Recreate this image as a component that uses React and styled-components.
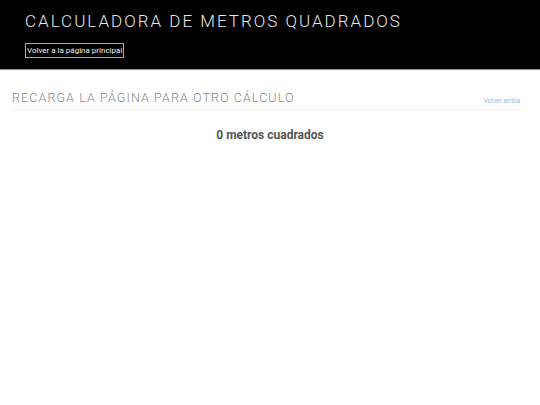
import styled, { createGlobalStyle } from "styled-components"

const Global = createGlobalStyle`
  body {
    margin: 0;
    background: #fff;
    font-family: Roboto, "Liberation Sans", sans-serif;
  }
`

const Header = styled.header`
  background: #000;
  height: 70px;
  border-bottom: 1px solid #8a8a8a;
  padding: 10px 25px 0;
  box-sizing: border-box;
`

const Title = styled.h1`
  margin: 0;
  font-size: 17px;
  font-weight: 300;
  letter-spacing: 2px;
  color: #e6e6e6;
  line-height: 22px;
`

const BackBtn = styled.a`
  display: inline-block;
  margin-top: 11px;
  border: 1px solid #aaa;
  color: #eee;
  font-size: 8px;
  line-height: 13px;
  padding: 0 1px;
  text-decoration: none;
`

const Section = styled.section`
  padding: 19px 20px 0 12px;
`

const SectionHead = styled.div`
  display: flex;
  justify-content: space-between;
  align-items: flex-end;
  border-bottom: 1px solid #f0f0f0;
  padding-bottom: 3px;
`

const SectionTitle = styled.h2`
  margin: 0;
  font-size: 12.5px;
  font-weight: 300;
  letter-spacing: 1.1px;
  color: #888;
  line-height: 17px;
`

const TopLink = styled.a`
  font-size: 6.5px;
  color: #9ab8d6;
  text-decoration: none;
  margin-bottom: 1px;
`

const Result = styled.p`
  margin: 18px 0 0;
  text-align: center;
  font-size: 12px;
  font-weight: 700;
  color: #555;
`

export default function App() {
  return (
    <>
      <Global />
      <Header>
        <Title>CALCULADORA DE METROS QUADRADOS</Title>
        <BackBtn href="#">Volver a la página principal</BackBtn>
      </Header>
      <Section>
        <SectionHead>
          <SectionTitle>RECARGA LA PÁGINA PARA OTRO CÁLCULO</SectionTitle>
          <TopLink href="#">Volver arriba</TopLink>
        </SectionHead>
      </Section>
      <Result>0 metros cuadrados</Result>
    </>
  )
}
